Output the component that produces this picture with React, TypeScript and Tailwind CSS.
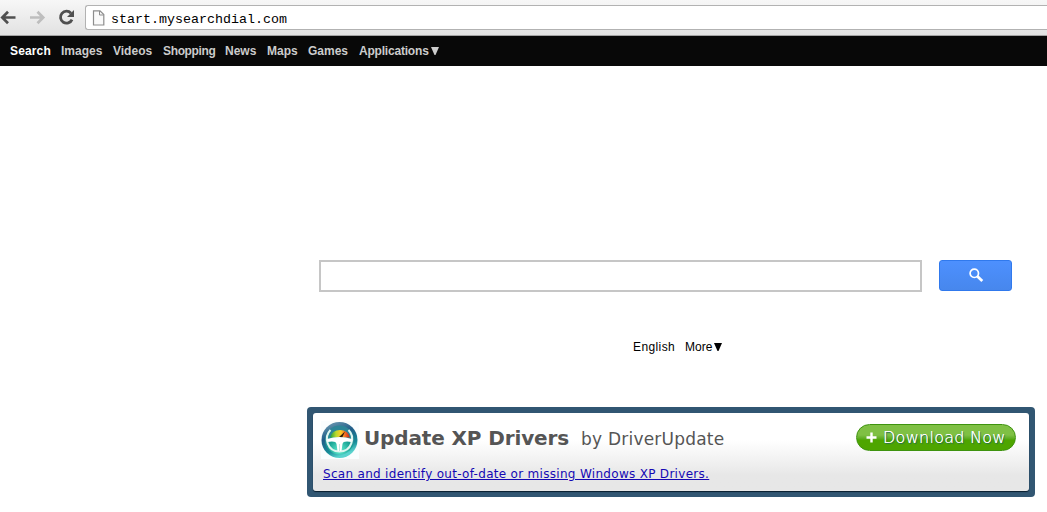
import classNames from "clsx"

type NavItem = {
  label: string
  className: string
  active?: boolean
  hasMenu?: boolean
}

const navItems: NavItem[] = [
  { label: "Search", className: "w-[51px] tracking-[0.15px]", active: true },
  { label: "Images", className: "w-[52px]" },
  { label: "Videos", className: "w-[50px]" },
  { label: "Shopping", className: "w-[62px] tracking-[-0.35px]" },
  { label: "News", className: "w-[42px]" },
  { label: "Maps", className: "w-[41px]" },
  { label: "Games", className: "w-[50px]" },
  {
    label: "Applications",
    className: "w-[90px] pl-px tracking-[-0.2px]",
    hasMenu: true,
  },
]

const App: React.FC = () => {
  return (
    <div className="h-[512px] w-full overflow-hidden bg-white font-['Liberation_Sans',Arial,sans-serif]">
      <BrowserBar />
      <NavBar />
      <main className="pt-[194px]">
        <SearchForm />
        <LanguageLinks />
        <DriverBanner />
      </main>
    </div>
  )
}

export default App

const BrowserBar = () => {
  return (
    <div className="flex h-9 items-start border-b border-[#a3a3a3] bg-linear-to-b from-[#f7f7f7] to-[#e2e2e2]">
      <div className="flex h-[35px] w-[85px] shrink-0 items-center">
        <svg width="85" height="35" viewBox="0 0 85 35" fill="none">
          {/* back */}
          <path
            d="M15.5 17.5H3M8 11.8L2.3 17.5L8 23.2"
            stroke="#505050"
            strokeWidth="2.7"
          />
          {/* forward */}
          <path
            d="M30 17.5H42.5M37.5 11.8L43.2 17.5L37.5 23.2"
            stroke="#bebebe"
            strokeWidth="2.7"
          />
          {/* reload */}
          <path
            d="M71 13.2A6 6 0 1 0 72 19.6"
            stroke="#505050"
            strokeWidth="2.8"
          />
          <path d="M74 10V17H67Z" fill="#505050" />
        </svg>
      </div>
      <div className="mt-[5px] flex h-[25px] flex-1 items-center rounded-l-[3px] border border-r-0 border-[#b2b2b2] bg-white pl-[6px]">
        <svg width="13" height="16" viewBox="0 0 13 16">
          <path
            d="M1.5 0.8H8L11.8 4.6V15H1.5Z"
            fill="#fafafa"
            stroke="#8d8d8d"
            strokeWidth="1.2"
          />
          <path d="M7.5 1V5H11.5" fill="none" stroke="#8d8d8d" />
        </svg>
        <span className="mt-[5px] ml-[6px] font-['Liberation_Mono',monospace] text-[13.33px] leading-none text-black">
          start.mysearchdial.com
        </span>
      </div>
    </div>
  )
}

const NavBar = () => {
  return (
    <nav className="flex h-[30px] items-center bg-[#080808] pl-[10px] text-[12px] leading-none font-bold">
      {navItems.map(({ label, className, active, hasMenu }) => (
        <a
          key={label}
          className={classNames(
            "flex shrink-0 items-center",
            className,
            active ? "text-white" : "text-[#cccccc]",
          )}
        >
          {label}
          {hasMenu && <DownArrow />}
        </a>
      ))}
    </nav>
  )
}

const DownArrow = () => {
  return (
    <svg
      className="ml-[2px] shrink-0"
      width="8"
      height="8"
      viewBox="0 0 8 8"
      fill="currentColor"
    >
      <path d="M0 0H8L4.5 8H3.5Z" />
    </svg>
  )
}

const SearchForm = () => {
  return (
    <div className="flex pl-[319px]">
      <input
        type="text"
        className="h-8 w-[603px] border-2 border-[#c6c6c6] bg-white px-2 outline-none"
      />
      <button className="ml-[17px] flex h-[31px] w-[73px] items-center justify-center rounded-[3px] border border-[#3079ed] bg-linear-to-b from-[#4d90fe] to-[#4787ed] pl-[2px]">
        <svg width="15" height="15" viewBox="0 0 15 15" fill="none">
          <circle cx="5.3" cy="5.3" r="4.2" stroke="#fff" strokeWidth="1.7" />
          <path d="M8.3 8.3L13.3 13" stroke="#fff" strokeWidth="2.8" />
        </svg>
      </button>
    </div>
  )
}

const LanguageLinks = () => {
  return (
    <div className="mt-[48px] flex h-[14px] items-center pl-[633px] text-[12px] leading-[14px] text-black">
      <span className="w-[52px] tracking-[0.4px]">English</span>
      <span>More</span>
      <DownArrow />
    </div>
  )
}

const DriverBanner = () => {
  return (
    <div className="mt-[53px] ml-[307px] h-[90px] w-[728px] rounded-[4px] bg-[#315672] p-[6px] font-['DejaVu_Sans',Verdana,sans-serif]">
      <div className="h-[78px] rounded-[3px] bg-linear-to-b from-white from-35% to-[#e7e7e7] to-80% px-[8px] pt-[8px] shadow-[0_1px_1px_#071c2c]">
        <div className="flex h-[38px] items-start">
          <WheelLogo />
          <span className="ml-[5px] w-[216px] text-[20px] leading-[34px] font-bold tracking-[-0.13px] whitespace-nowrap text-[#555555]">
            Update XP Drivers
          </span>
          <span className="ml-[1px] text-[17px] leading-[37px] tracking-[0.22px] whitespace-nowrap text-[#555555]">
            by DriverUpdate
          </span>
          <button className="mt-[3px] mr-[5px] ml-auto flex h-[27px] w-[160px] items-center rounded-full border border-[#3e930f] bg-linear-to-b from-[#7fc044] from-40% to-[#4ea500] to-60% pl-[9px] text-white">
            <svg width="11" height="11" viewBox="0 0 11 11">
              <path d="M5.5 0.5V10.5M0.5 5.5H10.5" stroke="#fff" strokeWidth="2.4" />
            </svg>
            <span className="ml-[6px] text-[16px] leading-none font-extralight tracking-[0.27px] whitespace-nowrap [text-shadow:0_0_0.5px_#fff,1px_1px_1px_#1b645f]">
              Download Now
            </span>
          </button>
        </div>
        <a className="ml-[2px] block text-[12px] leading-[31px] tracking-[0.3px] whitespace-nowrap text-[#1508b4] underline underline-offset-1">
          Scan and identify out-of-date or missing Windows XP Drivers.
        </a>
      </div>
    </div>
  )
}

const WheelLogo = () => {
  return (
    <svg className="shrink-0" width="38" height="38" viewBox="0 0 38 38">
      <defs>
        <linearGradient id="rim" x1="0" y1="0" x2="0.4" y2="1">
          <stop offset="0" stopColor="#7ba5ba" />
          <stop offset="0.45" stopColor="#1f5c88" />
          <stop offset="0.8" stopColor="#168c98" />
          <stop offset="1" stopColor="#5ad3ce" />
        </linearGradient>
        <radialGradient id="dial" cx="0.5" cy="0.85" r="0.65">
          <stop offset="0" stopColor="#65efd2" />
          <stop offset="0.6" stopColor="#18a394" />
          <stop offset="1" stopColor="#2b8597" />
        </radialGradient>
        <linearGradient id="gauge">
          <stop offset="0" stopColor="#1d9c3c" />
          <stop offset="0.3" stopColor="#b9d92c" />
          <stop offset="0.55" stopColor="#ffcb25" />
          <stop offset="0.8" stopColor="#ee5a20" />
          <stop offset="1" stopColor="#bc2119" />
        </linearGradient>
      </defs>
      <rect width="38" height="38" fill="#fafdfe" />
      <circle cx="18.5" cy="19" r="18" fill="url(#rim)" />
      <circle cx="18.5" cy="19" r="14.5" fill="url(#dial)" />
      <path d="M9 16.5Q11 9 19 9T29 16.5Z" fill="url(#gauge)" />
      <path d="M17 17L24 10.5L21 17Z" fill="#321b0a" />
      {/* steering wheel */}
      <path
        d="M9.5 9C2.5 16 6 30.5 18.5 30.5S34.5 16 27.5 9"
        fill="none"
        stroke="#dff6f0"
        strokeWidth="2"
      />
      <path
        d="M6 18Q18.5 14 31 18L30.5 21Q22 19.5 21.5 23L20.5 30H16.5L15.5 23Q15 19.5 6.5 21Z"
        fill="#fff"
      />
      <path d="M18.5 23V30" stroke="#a7dcd5" strokeWidth="0.7" />
    </svg>
  )
}
